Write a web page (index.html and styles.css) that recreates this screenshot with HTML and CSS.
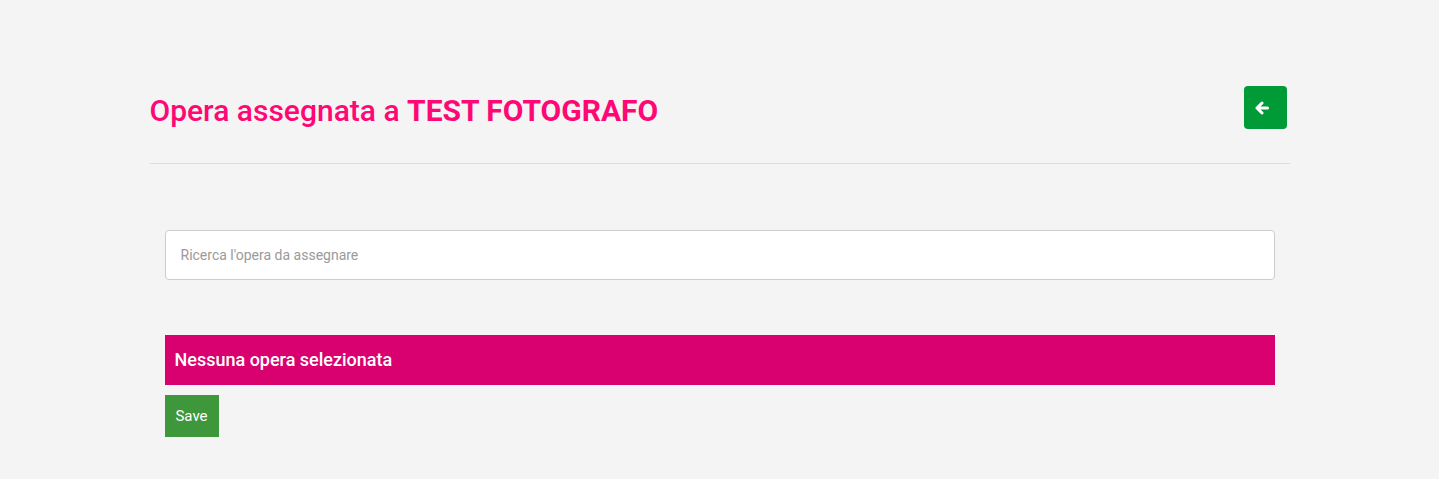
FILE: index.html
```html
<!DOCTYPE html>
<html lang="it">
<head>
    <meta charset="UTF-8">
    <meta name="viewport" content="width=device-width, initial-scale=1.0">
    <title>Assegna opera</title>
    <link rel="stylesheet" href="styles.css">
</head>
<body>
    <div class="container">
        <div class="page-header">
            <h1>Opera assegnata a <strong>TEST FOTOGRAFO</strong></h1>
            <a href="#" class="btn-back" title="Indietro">
                <svg width="14" height="14" viewBox="0 0 14 14">
                    <path d="M7 2 L2 7 L7 12 M2 7 H12.5" fill="none" stroke="#fff" stroke-width="3" stroke-linecap="round" stroke-linejoin="round"/>
                </svg>
            </a>
        </div>
        <hr>

        <div class="content">
            <input type="text" class="search" placeholder="Ricerca l'opera da assegnare">

            <div class="selected">Nessuna opera selezionata</div>
            <button class="btn-save">Save</button>
        </div>
    </div>
</body>
</html>
```

FILE: styles.css
```css
body {
    font-family: 'Roboto', 'Liberation Sans', sans-serif;
    background-color: #f4f4f4;
    color: #333;
    margin: 0;
    padding: 0;
}
.container {
    width: 1140px;
    margin: 0 auto;
    padding-top: 86px;
}
.page-header {
    display: flex;
    justify-content: space-between;
    align-items: center;
    padding-right: 3px;
}
h1 {
    margin: 0;
    padding-top: 6px;
    font-size: 30px;
    font-weight: 500;
    color: #ff0774;
}
h1 strong {
    font-weight: 700;
}
.btn-back {
    display: flex;
    justify-content: center;
    align-items: center;
    width: 43px;
    height: 43px;
    border-radius: 4px;
    background-color: #009a36;
}
.btn-back svg {
    margin-right: 6px;
}
hr {
    margin: 34px 0 0;
    border: none;
    border-top: 1px solid #dcdcdc;
}
.content {
    padding: 66px 15px 0;
}
.search {
    display: block;
    box-sizing: border-box;
    width: 100%;
    height: 50px;
    padding: 0 15px;
    border: 1px solid #ccc;
    border-radius: 4px;
    background-color: #fff;
    font-family: inherit;
    font-size: 14px;
    color: #333;
}
.search::placeholder {
    color: #9a9a9a;
}
.selected {
    margin-top: 55px;
    height: 50px;
    line-height: 50px;
    padding: 0 10px;
    background-color: #d9006f;
    color: #fff;
    font-size: 18px;
    font-weight: 500;
}
.btn-save {
    margin-top: 10px;
    width: 54px;
    height: 42px;
    border: none;
    background-color: #3f973b;
    color: #fff;
    font-family: inherit;
    font-size: 15px;
    cursor: pointer;
}
```
